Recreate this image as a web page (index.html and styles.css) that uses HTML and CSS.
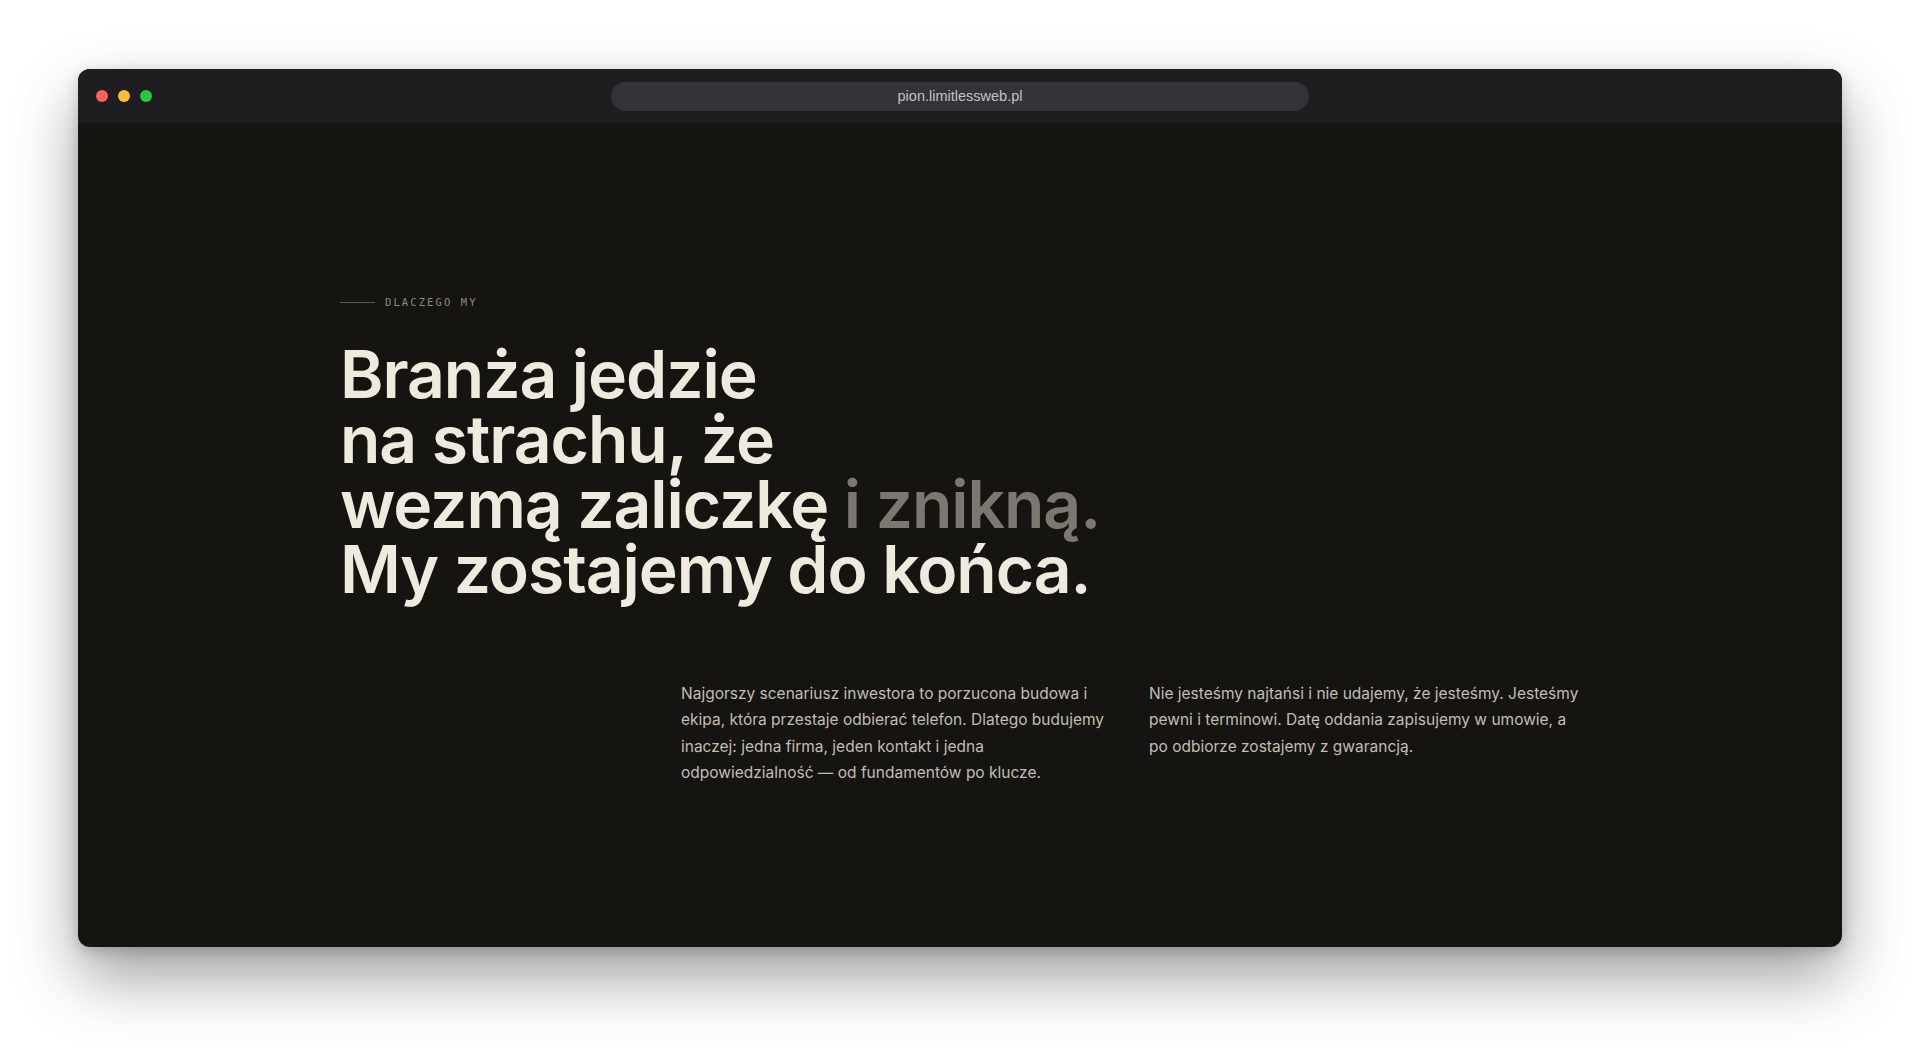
FILE: index.html
```html
<!DOCTYPE html>
<html lang="pl">
<head>
<meta charset="utf-8">
<title>pion.limitlessweb.pl</title>
<link rel="stylesheet" href="styles.css">
</head>
<body>
<div class="stage">
  <div class="window">
    <div class="titlebar">
      <div class="lights">
        <span class="light red"></span>
        <span class="light yellow"></span>
        <span class="light green"></span>
      </div>
      <div class="url">pion.limitlessweb.pl</div>
      <div></div>
    </div>
    <main class="content">
      <section class="why">
        <div class="eyebrow"><span class="rule"></span><span>DLACZEGO MY</span></div>
        <h1 class="headline">Branża jedzie<br>na strachu, że<br>wezmą zaliczkę <span class="muted">i znikną.</span><br>My zostajemy do końca.</h1>
        <div class="cols">
          <p>Najgorszy scenariusz inwestora to porzucona budowa i ekipa, która przestaje odbierać telefon. Dlatego budujemy inaczej: jedna firma, jeden kontakt i jedna odpowiedzialność — od fundamentów po klucze.</p>
          <p>Nie jesteśmy najtańsi i nie udajemy, że jesteśmy. Jesteśmy pewni i terminowi. Datę oddania zapisujemy w umowie, a po odbiorze zostajemy z gwarancją.</p>
        </div>
      </section>
    </main>
  </div>
</div>
</body>
</html>
```

FILE: styles.css
```css
html, body {
  margin: 0;
  padding: 0;
  background: #ffffff;
  height: 1048px;
  overflow: hidden;
}

.stage {
  padding: 69px 78px 0 78px;
}

.window {
  height: 878px;
  border-radius: 12px;
  overflow: hidden;
  background: #151410;
  display: flex;
  flex-direction: column;
  box-shadow: 0 30px 64px rgba(0, 0, 0, 0.38), 0 4px 14px rgba(0, 0, 0, 0.18);
}

.titlebar {
  height: 54px;
  flex: none;
  background: #1e1e21;
  display: grid;
  grid-template-columns: 1fr 698px 1fr;
  align-items: center;
}

.lights {
  display: flex;
  gap: 10px;
  padding-left: 18px;
}

.light {
  width: 12px;
  height: 12px;
  border-radius: 50%;
}

.red { background: #fe5f57; }
.yellow { background: #febc2e; }
.green { background: #28c840; }

.url {
  height: 29px;
  border-radius: 15px;
  background: #333338;
  color: #c2c2c6;
  font-family: "Liberation Sans", Arial, sans-serif;
  font-size: 14.5px;
  display: flex;
  align-items: center;
  justify-content: center;
}

.content {
  flex: 1;
}

.why {
  width: 1240px;
  margin: 0 auto;
  padding-top: 172px;
}

.eyebrow {
  display: flex;
  align-items: center;
  gap: 10px;
  height: 14px;
  font-family: "DejaVu Sans Mono", monospace;
  font-size: 10.5px;
  letter-spacing: 2.1px;
  color: #8c8980;
}

.rule {
  width: 35px;
  height: 1px;
  background: #5a5852;
}

.headline {
  margin: 32.5px 0 0 0;
  font-family: Inter, "Liberation Sans", sans-serif;
  font-weight: 600;
  font-size: 66px;
  line-height: 65px;
  letter-spacing: -0.016em;
  color: #eeeade;
}

.muted {
  color: #7b7870;
}

.cols {
  margin: 79px 0 0 341px;
  display: grid;
  grid-template-columns: 432px 432px;
  column-gap: 36px;
}

.cols p {
  margin: 0;
  font-family: Inter, "Liberation Sans", sans-serif;
  font-weight: 400;
  font-size: 15.5px;
  line-height: 26.5px;
  color: #c2beb3;
}
```
